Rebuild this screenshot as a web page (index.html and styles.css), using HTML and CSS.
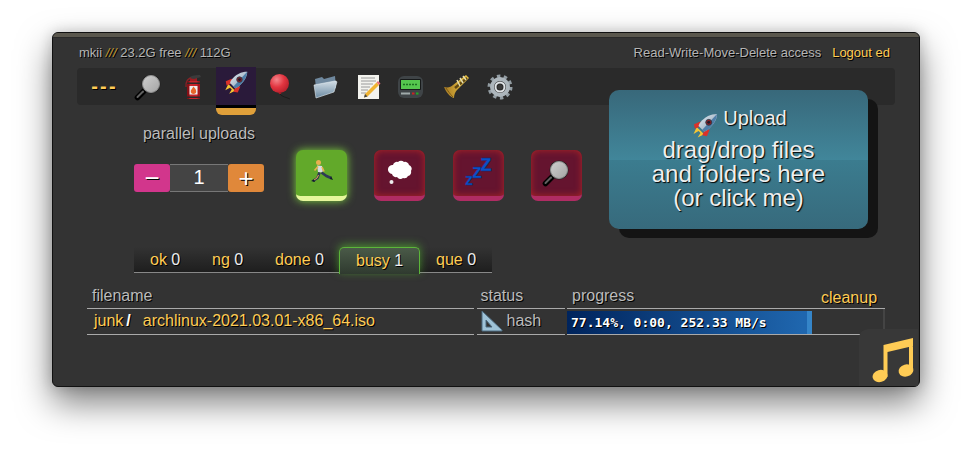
FILE: index.html
```html
<!DOCTYPE html>
<html lang="en">
<head>
<meta charset="utf-8">
<title>up2k</title>
<link rel="stylesheet" href="styles.css">
</head>
<body>
<svg class="defs" width="0" height="0" aria-hidden="true">
  <defs>
    <linearGradient id="lens" x1="0" y1="0" x2="1" y2="1"><stop offset="0" stop-color="#cfcfcf"/><stop offset="1" stop-color="#a4a4a4"/></linearGradient>
    <linearGradient id="steel" x1="0" y1="0" x2="1" y2="1"><stop offset="0" stop-color="#e6eef4"/><stop offset="1" stop-color="#7f97ac"/></linearGradient>
    <linearGradient id="folder" x1="0" y1="0" x2="0" y2="1"><stop offset="0" stop-color="#d3dee6"/><stop offset="1" stop-color="#6b8aa2"/></linearGradient>
    <linearGradient id="brass" x1="0" y1="0" x2="1" y2="0"><stop offset="0" stop-color="#a97c24"/><stop offset="1" stop-color="#ecc644"/></linearGradient>
    <radialGradient id="red" cx=".35" cy=".3" r=".8"><stop offset="0" stop-color="#f4868c"/><stop offset=".5" stop-color="#e23540"/><stop offset="1" stop-color="#b01c28"/></radialGradient>
    <symbol id="i-mag" viewBox="0 0 28 28">
      <path d="M10 18 3.500 24.500" stroke="#000" stroke-width="5.500" stroke-linecap="round"/>
      <path d="M9 18.500 3.500 24" stroke="#606060" stroke-width="2" stroke-linecap="round"/>
      <circle cx="17" cy="11" r="9.500" fill="#222"/>
      <circle cx="17" cy="11" r="8.500" fill="url(#lens)" stroke="#8f8f8f" stroke-width="1"/>
    </symbol>
    <symbol id="i-ext" viewBox="0 0 28 28">
      <path d="M12 8V5h7v3z" fill="#9c1b20"/>
      <path d="M11 5c1-2 5-3 11-3l1 2-7 2z" fill="#3b3b3b"/>
      <path d="M13 5C9 6 7.500 9 8 14" stroke="#8a2226" stroke-width="1.300" fill="none"/>
      <rect x="9" y="8" width="13" height="18" rx="3" fill="#c8242a"/>
      <rect x="9" y="8" width="2.500" height="18" rx="1.200" fill="#861016"/>
      <rect x="19.500" y="8" width="2.500" height="18" rx="1.200" fill="#a0161c"/>
      <rect x="11.500" y="13" width="8" height="8.500" fill="#eee"/>
      <path d="M15.500 13.500c1.700 2 2.700 3.300 2.700 4.800a2.700 2.700 0 0 1-5.400 0c0-1.500 1-2 2.700-4.800z" fill="#e8662a"/>
      <rect x="9" y="9.500" width="13" height="1.500" fill="#2a2a2a"/>
      <rect x="9" y="23.500" width="13" height="1.500" fill="#2a2a2a"/>
    </symbol>
    <symbol id="i-rocket" viewBox="0 0 28 28">
      <g transform="translate(2 2) scale(.86)">
        <path d="M5 15 1.500 22.500 7 19.500 9 21.500 6 26.500 13 23z" fill="#f4c534"/>
        <path d="M9 9 2 12l1 5 7-3z" fill="#d9322a"/>
        <path d="M19 18l-3 7-5-1 3-7z" fill="#d9322a"/>
        <path d="M27 1c-7 0-13 3-18 9-1.500 2-2 4-2 4l6 6s2-.5 4-2c6-5 10-11 10-17z" fill="url(#steel)"/>
        <path d="M27 1c-.5 6-4 12-10 17-2 1.500-4 2-4 2l-2-2 16-17z" fill="#4e7ea8"/>
        <circle cx="18" cy="10" r="3.200" fill="#8d1f24" stroke="#2d3a48" stroke-width="1"/>
        <circle cx="18" cy="10" r="1.600" fill="#1b1b2b"/>
      </g>
    </symbol>
    <symbol id="i-balloon" viewBox="0 0 28 28">
      <ellipse cx="13.500" cy="10.500" rx="9.500" ry="9.500" fill="url(#red)"/>
      <path d="M12.500 21h3l-1-1.500h-1z" fill="#a51a24"/>
      <path d="M14 21c2 3 6 3 10 5" stroke="#1c1c1c" stroke-width="1" fill="none"/>
    </symbol>
    <symbol id="i-folder" viewBox="0 0 28 28">
      <path d="M5 6l7-2 2 2 11-3 1 12L7 24z" fill="#6f889e"/>
      <path d="M4 12l21-4c1.200-.2 2 .4 1.800 1.500L24 19 6 25z" fill="url(#folder)" stroke="#e4ecf2" stroke-width=".6"/>
    </symbol>
    <symbol id="i-note" viewBox="0 0 28 28">
      <rect x="4" y="2" width="21" height="24" fill="#f3f3ee"/>
      <path d="M7 5h14M7 8h15M7 11h12M7 14h9M7 17h7M7 20h5" stroke="#9a9a9a" stroke-width="1"/>
      <path d="M11 21l-1 3.500 3.500-1L25 12l-2.500-2.500z" fill="#f0b432"/>
      <path d="M22.500 9.500 25 12l1.500-1.500L24 8z" fill="#e8707a"/>
      <path d="M10 24.500l1-3.500 2.500 2.500z" fill="#444"/>
    </symbol>
    <symbol id="i-pager" viewBox="0 0 28 28">
      <rect x="0" y="3" width="25" height="22" rx="6" fill="#3f4447"/>
      <rect x="2" y="6" width="21" height="11" rx="1" fill="#171a1a"/>
      <rect x="3" y="7" width="19" height="9" fill="#55c64e"/>
      <path d="M5 11.500h15" stroke="#1d6f22" stroke-width="1.500" stroke-dasharray="2 1"/>
      <rect x="3" y="19.500" width="9" height="2" fill="#a0aaaa"/>
      <rect x="14" y="19.500" width="2.500" height="2" fill="#c22"/>
      <rect x="18" y="19.500" width="2.500" height="2" fill="#2a2"/>
    </symbol>
    <symbol id="i-trumpet" viewBox="0 0 28 28">
      <path d="M2 14c4 1 7 0 9-2L24 2l3 3-12 12c-2 2-3 5-3 8-4-1-8-6-10-11z" fill="url(#brass)"/>
      <path d="M13 15 25 5" stroke="#5f4712" stroke-width="2.500"/>
      <path d="M4 15c2 3 4 6 7 9" stroke="#7c5a16" stroke-width="1" fill="none"/>
      <path d="M15 7l3 6M18 5l3 5M21 3l3 4" stroke="#e3dcae" stroke-width="1.500"/>
    </symbol>
    <symbol id="i-gear" viewBox="0 0 28 28">
      <circle cx="14" cy="14" r="10.500" fill="none" stroke="#939da3" stroke-width="4" stroke-dasharray="3.300 3.300"/>
      <circle cx="14" cy="14" r="8" fill="none" stroke="#adb6bc" stroke-width="4"/>
      <circle cx="14" cy="14" r="4.500" fill="none" stroke="#dfe3e6" stroke-width="2"/>
      <circle cx="14" cy="14" r="2.500" fill="#3a3a3a"/>
    </symbol>
    <symbol id="i-run" viewBox="0 0 28 28">
      <circle cx="10.500" cy="3.500" r="2.500" fill="#e8b050"/>
      <path d="M9 6.500 14 7l1 6.500-5-.5z" fill="#d8dce0"/>
      <path d="M10 7.500 6.500 11.500" stroke="#e8b050" stroke-width="1.600" fill="none"/>
      <path d="M14 8l2 4.500" stroke="#e8b050" stroke-width="1.600" fill="none"/>
      <path d="M11.500 13.500 9.500 19 5 22" stroke="#2e3a55" stroke-width="2.600" fill="none"/>
      <path d="M13.500 13.500 18.500 17 23 19" stroke="#2e3a55" stroke-width="2.600" fill="none"/>
      <path d="M10.500 16l-1.500 3-3 2" stroke="#e8a850" stroke-width="1" fill="none"/>
      <path d="M3 22l3-1.500 1 2.500zM23 17l2 4-3-1z" fill="#10182b"/>
    </symbol>
    <symbol id="i-cloud" viewBox="0 0 28 28">
      <path d="M7 6a4 4 0 0 1 5-3 4 4 0 0 1 6 0 4 4 0 0 1 5 3 4 4 0 0 1 2 6 4 4 0 0 1-3 5 4 4 0 0 1-5 2 4 4 0 0 1-6-1 4 4 0 0 1-5-3 4 4 0 0 1 1-9z" fill="#fff"/>
      <circle cx="5.500" cy="23" r="2" fill="#eee"/>
    </symbol>
    <symbol id="i-tri" viewBox="0 0 22 22">
      <path d="M1 1 21 20v1H1z" fill="#9fc3d8" stroke="#4d6b80" stroke-width="1"/>
      <path d="M5 10l6 7H5z" fill="#333" stroke="#4d6b80" stroke-width="1"/>
    </symbol>
  </defs>
</svg>

<main class="window">
  <div class="titlebar"></div>

  <header class="status">
    <div>mkii <span class="slashes">///</span> 23.2G free <span class="slashes">///</span> 112G</div>
    <div class="account">
      <span>Read-Write-Move-Delete access</span>
      <a class="link" href="#logout">Logout ed</a>
    </div>
  </header>

  <nav class="nav">
    <a class="nav-item nav-dash" href="#more">---</a>
    <a class="nav-item" href="#search"><svg class="nav-icon"><use href="#i-mag"/></svg></a>
    <a class="nav-item" href="#unpost"><svg class="nav-icon"><use href="#i-ext"/></svg></a>
    <a class="nav-item nav-active" href="#up2k"><svg class="nav-icon"><use href="#i-rocket"/></svg></a>
    <a class="nav-item" href="#bup"><svg class="nav-icon"><use href="#i-balloon"/></svg></a>
    <a class="nav-item" href="#mkdir"><svg class="nav-icon"><use href="#i-folder"/></svg></a>
    <a class="nav-item" href="#new-md"><svg class="nav-icon"><use href="#i-note"/></svg></a>
    <a class="nav-item" href="#msg"><svg class="nav-icon"><use href="#i-pager"/></svg></a>
    <a class="nav-item" href="#player"><svg class="nav-icon"><use href="#i-trumpet"/></svg></a>
    <a class="nav-item" href="#cfg"><svg class="nav-icon"><use href="#i-gear"/></svg></a>
  </nav>

  <section class="controls">
    <div class="parallel">
      <div class="parallel-label">parallel uploads</div>
      <div class="spinner">
        <button class="spin spin-minus" type="button">&minus;</button>
        <div class="spin-value">1</div>
        <button class="spin spin-plus" type="button">+</button>
      </div>
    </div>
    <div class="modes">
      <button class="mode mode-on" type="button"><svg class="mode-icon"><use href="#i-run"/></svg></button>
      <button class="mode" type="button"><svg class="mode-icon"><use href="#i-cloud"/></svg></button>
      <button class="mode" type="button"><svg class="mode-icon" viewBox="0 0 28 28"><text class="zzz z1" x="1" y="26">z</text><text class="zzz z2" x="8" y="19">z</text><text class="zzz z3" x="16" y="12">z</text></svg></button>
      <button class="mode" type="button"><svg class="mode-icon"><use href="#i-mag"/></svg></button>
    </div>
  </section>

  <div class="dropzone">
    <div class="drop-title"><svg class="drop-icon"><use href="#i-rocket"/></svg> Upload</div>
    <div class="drop-text">drag/drop files<br>and folders here<br>(or click me)</div>
  </div>

  <div class="tabs">
    <a class="tab tab-ok" href="#ok">ok <b>0</b></a>
    <a class="tab tab-ng" href="#ng">ng <b>0</b></a>
    <a class="tab tab-done" href="#done">done <b>0</b></a>
    <a class="tab tab-busy" href="#busy">busy <b>1</b></a>
    <a class="tab tab-que" href="#que">que <b>0</b></a>
  </div>

  <div class="table">
    <div class="th col-name">filename</div>
    <div class="th col-status">status</div>
    <div class="th col-prog">progress <a class="link cleanup" href="#cleanup">cleanup</a></div>
    <div class="td col-name"><a class="link" href="#junk">junk</a><span class="sep">/</span><a class="link" href="#iso">archlinux-2021.03.01-x86_64.iso</a></div>
    <div class="td col-status"><svg class="tri"><use href="#i-tri"/></svg> hash</div>
    <div class="td col-prog td-prog">
      <div class="bar" style="width:245px"><span class="bar-text">77.14%, 0:00, 252.33 MB/s</span></div>
    </div>
  </div>

  <button class="music" type="button" aria-label="audio player">
    <svg viewBox="0 0 46 46" width="46" height="46"><path d="M12.500 8 42 1v8L16.500 15V40h-4zM38 2h4v33h-4z" fill="#fc5"/><ellipse cx="9" cy="39" rx="7.500" ry="6" fill="#fc5" transform="rotate(-15 9 39)"/><ellipse cx="35" cy="33.500" rx="7.500" ry="6" fill="#fc5" transform="rotate(-15 35 33.500)"/></svg>
  </button>
</main>
</body>
</html>
```
FILE: styles.css
```css
* { box-sizing: border-box; }
html, body { margin: 0; height: 100%; }
body {
  background: #fff;
  padding: 32px 0 0 52px;
  overflow: hidden;
  font-family: "Liberation Sans", Arial, sans-serif;
  color: #bbb;
}
.defs { position: absolute; }
a { text-decoration: none; }
button { font-family: inherit; border: 0; padding: 0; }

.window {
  position: relative;
  width: 868px;
  height: 355px;
  background: #333;
  border: 1px solid #111;
  border-radius: 6px;
  overflow: visible;
  box-shadow: 0 16px 34px rgba(0, 0, 0, .5), 0 0 14px rgba(0, 0, 0, .18);
  display: flex;
  flex-direction: column;
}
.titlebar {
  height: 5px;
  flex: none;
  background: #5a574d;
  border-radius: 5px 5px 0 0;
  border-bottom: 1px solid #2a2a2a;
}
.status {
  height: 30px;
  padding: 7px 29px 0 26px;
  display: flex;
  justify-content: space-between;
  align-items: flex-start;
  font-size: 13px;
  line-height: 15px;
  color: #b4b4b4;
  text-shadow: 1px 1px 0 #000;
  flex: none;
}
.slashes { color: #c09830; font-style: italic; }
.account { display: flex; gap: 11px; }
.link { color: #fc5; text-shadow: 1px 1px 0 #000; }

.nav {
  flex: none;
  height: 37px;
  margin: 0 24px;
  padding-left: 7.500px;
  background: #2a2a2a;
  border-radius: 4px;
  display: flex;
  gap: 3.900px;
}
.nav-item {
  width: 40px;
  height: 37px;
  display: flex;
  align-items: center;
  justify-content: center;
  flex: none;
}
.nav-icon { width: 28px; height: 28px; }
.nav-dash {
  color: #fc5;
  font-size: 20px;
  font-weight: 700;
  letter-spacing: 2.200px;
  text-shadow: 1px 1px 0 #000;
}
.nav-active {
  height: 48px;
  margin-top: -1px;
  padding-bottom: 9px;
  background: #2a1a3a;
  border-bottom: 7px solid #e0a03a;
  border-radius: 0 0 6px 6px;
  box-shadow: inset 0 -3px 0 #000;
}

.controls {
  flex: none;
  display: flex;
  align-items: flex-start;
  padding: 21px 0 0 81px;
  height: 96px;
}
.parallel { width: 130px; flex: none; }
.parallel-label {
  font-size: 16px;
  line-height: 16px;
  text-align: center;
  white-space: nowrap;
  color: #bbb;
  text-shadow: 1px 1px 0 #000;
}
.spinner { display: flex; margin-top: 22px; height: 28px; }
.spin {
  width: 36px;
  color: #fff;
  font-size: 26px;
  line-height: 26px;
  font-weight: 400;
  border-radius: 3px;
  text-shadow: 1px 1px 0 #000;
}
.spin-minus { background: #d2368c; }
.spin-plus { background: #e0883a; }
.spin-value {
  flex: 1;
  background: #444;
  border-top: 1px solid #777;
  border-bottom: 1px solid #777;
  color: #fff;
  font-size: 20px;
  line-height: 25px;
  text-align: center;
}
.modes { display: flex; gap: 27.300px; margin: 24px 0 0 32px; }
.mode {
  width: 51px;
  height: 51px;
  border-radius: 7px;
  background: #65142f;
  border-bottom: 5px solid #b02c63;
  box-shadow: inset 0 0 7px #b02626;
  display: flex;
  align-items: center;
  justify-content: center;
}
.mode-on {
  background: #62a92a;
  border-bottom-color: #e6f79c;
  box-shadow: 0 0 9px #7dd23e;
}
.mode-icon { width: 28px; height: 28px; overflow: visible; }
.zzz { fill: #0a50c8; font-weight: 700; font-family: "Liberation Sans", sans-serif; stroke: #062a70; stroke-width: .3px; }
.z1 { font-size: 16px; }
.z2 { font-size: 20px; }
.z3 { font-size: 24px; }

.dropzone {
  position: absolute;
  left: 556px;
  top: 57px;
  width: 259px;
  height: 139px;
  border-radius: 10px;
  background: linear-gradient(#38687a 0%, #41869a 50%, #3b7c8f 50.500%, #376a7c 100%);
  box-shadow: 10px 9px 0 #141414;
  text-align: center;
  color: #eee;
  text-shadow: 1px 1px 1px #000;
  padding-top: 16px;
}
.drop-title { font-size: 20px; line-height: 24px; height: 24px; display: flex; justify-content: center; align-items: flex-start; gap: 3px; }
.drop-icon { width: 30px; height: 30px; margin-top: 5px; flex: none; }
.drop-text { font-size: 24px; line-height: 24px; margin-top: 8px; }

.tabs {
  flex: none;
  display: flex;
  height: 26px;
  margin: 46px 0 0 81px;
  width: 358px;
  background: linear-gradient(#333, #1e1e1e);
  border-bottom: 1px solid #888;
  font-size: 16px;
}
.tab { display: block; color: #fc5; line-height: 26px; text-shadow: 1px 1px 0 #000; padding-left: 16px; white-space: nowrap; }
.tab b { color: #eee; font-weight: 400; }
.tab-ok { width: 62px; }
.tab-ng { width: 63px; }
.tab-done { width: 80px; }
.tab-busy {
  width: 81px;
  height: 27px;
  color: #fc5;
  background: linear-gradient(#4a5a48, #2f3a2f);
  border: 1px solid #5cb53a;
  border-bottom: 0;
  border-radius: 5px 5px 0 0;
  box-shadow: 0 -2px 8px rgba(90, 200, 50, .6);
  line-height: 25px;
}
.tab-que { flex: 1; }

.table {
  flex: none;
  display: grid;
  grid-template-columns: 387px 88px 318px;
  column-gap: 2.500px;
  grid-template-rows: 23px 26px;
  margin: 13px 0 0 34px;
  width: 800px;
  font-size: 16px;
  color: #bbb;
  text-shadow: 1px 1px 0 #000;
}
.th { border-bottom: 1px solid #aaa; padding: 1px 0 0 5px; line-height: 18px; position: relative; }
.th.col-status { padding-left: 4px; }
.cleanup { position: absolute; left: 254px; top: 3px; }
.td { border-bottom: 1px solid #aaa; line-height: 24px; display: flex; align-items: center; white-space: nowrap; padding-bottom: 1px; }
.td.col-name { padding-left: 7px; }
.sep { color: #fff; font-weight: 700; margin: 0 12px 0 3px; }
.td.col-status { padding-left: 4px; gap: 4px; }
.tri { width: 22px; height: 22px; flex: none; }
.td-prog { padding: 2px 0 0; border-right: 2px solid #444; }
.bar {
  height: 23px;
  background: linear-gradient(90deg, #00245c, #1f66ae 98%);
  border-right: 5px solid #3585c8;
  display: flex;
  align-items: center;
  padding-left: 4px;
}
.bar-text {
  font-family: "DejaVu Sans Mono", monospace;
  font-weight: 700;
  font-size: 13px;
  color: #fff;
  text-shadow: 1px 1px 0 #000;
  white-space: nowrap;
}

.music {
  position: absolute;
  right: 1px;
  bottom: 0;
  width: 59px;
  height: 57px;
  background: #383838;
  border-radius: 9px 0 0 0;
  display: flex;
  align-items: flex-end;
  justify-content: flex-end;
  padding: 0 1px 3px 0;
}
```
